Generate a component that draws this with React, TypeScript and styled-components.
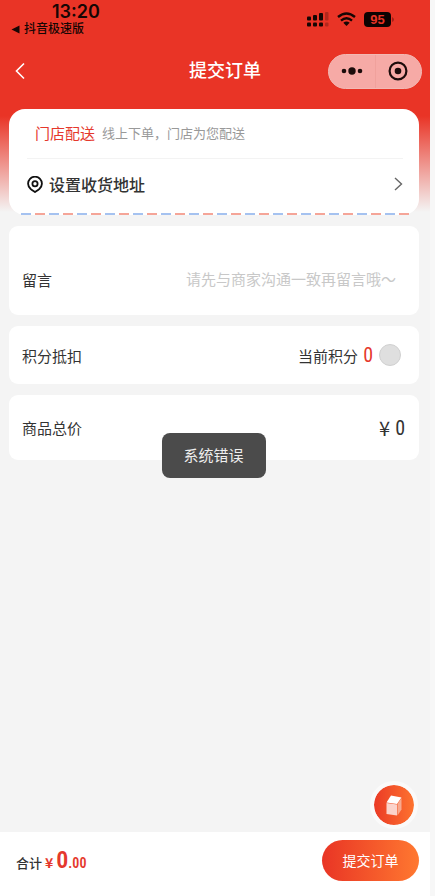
import React from "react";
import styled, { createGlobalStyle } from "styled-components";

const Global = createGlobalStyle`
  * { box-sizing: border-box; }
  body { margin: 0; background: #f7f7f7; }
  button, input { font-family: inherit; border: 0; background: none; padding: 0; margin: 0; }
  button { cursor: pointer; }
`;

const Screen = styled.div`
  display: flex;
  flex-direction: column;
  min-height: 100vh;
  margin-right: 5px;
  font-family: "Liberation Sans", "Noto Sans CJK SC", sans-serif;
  color: #333;
  background: linear-gradient(#e93426 0, #e93426 116px, #f4f4f4 212px);
`;

const StatusBar = styled.header`
  display: flex;
  justify-content: space-between;
  height: 38px;
  padding: 0 36px 0 11px;
  color: #160604;
`;

const ClockGroup = styled.div`
  display: flex;
  flex-direction: column;
`;

const Clock = styled.time`
  padding: 2px 0 0 41px;
  font: 600 18px/20px Inter, sans-serif;
`;

const BackToApp = styled.a`
  display: flex;
  align-items: center;
  gap: 4px;
  font-size: 12px;
  line-height: 14px;
  font-weight: 500;
  color: inherit;
  text-decoration: none;
`;

const StatusIcons = styled.div`
  display: flex;
  align-items: center;
  gap: 8px;
`;

const BatteryGroup = styled.div`
  display: flex;
  align-items: center;
  gap: 1px;
`;

const Battery = styled.span`
  width: 27px;
  height: 15px;
  border-radius: 4px;
  background: #0d0302;
  color: #e93426;
  font: 700 13px/15px "Liberation Sans", sans-serif;
  text-align: center;
`;

const NavBar = styled.nav`
  display: grid;
  grid-template-columns: 1fr auto 1fr;
  align-items: center;
  height: 66px;
  padding: 0 8px 0 14px;
  color: #fff;
`;

const IconButton = styled.button`
  display: flex;
  justify-self: start;
  color: inherit;
`;

const Title = styled.h1`
  margin: 0 0 0 14px;
  font-size: 18px;
  line-height: 26px;
  font-weight: 500;
`;

const Capsule = styled.div`
  display: flex;
  justify-self: end;
  width: 94px;
  height: 35px;
  border: 1px solid #f2b9b4;
  border-radius: 18px;
  background: #f6aaa6;
  color: #1c0c0b;
`;

const CapsuleButton = styled.button`
  display: flex;
  flex: 1;
  align-items: center;
  justify-content: center;
  color: inherit;
  & + & { border-left: 1px solid #f0a19c; }
`;

const Content = styled.main`
  display: flex;
  flex: 1;
  flex-direction: column;
  gap: 11px;
  padding: 5px 11px 0 9px;
`;

const Card = styled.section<{ $height: number; $top?: number }>`
  display: flex;
  align-items: center;
  justify-content: space-between;
  min-height: ${(p) => p.$height}px;
  padding: ${(p) => p.$top ?? 0}px 14px 0 13px;
  border-radius: 9px;
  background: #fff;
  font-size: 15px;
`;

const AddressCard = styled.section`
  padding: 0 16px 0 18px;
  border-radius: 16px;
  background: #fff;
`;

const DeliveryRow = styled.div`
  display: flex;
  align-items: center;
  gap: 7px;
  height: 50px;
  padding: 0 0 2px 8px;
  border-bottom: 1px solid #f3f3f3;
`;

const DeliveryType = styled.strong`
  font-size: 15px;
  font-weight: 400;
  color: #e5382c;
`;

const DeliveryNote = styled.span`
  font-size: 13px;
  color: #999;
`;

const AddressButton = styled.button`
  display: flex;
  align-items: center;
  width: 100%;
  height: 54px;
  padding-bottom: 4px;
  font-size: 16px;
  font-weight: 500;
  color: #333;
`;

const AddressLabel = styled.span`
  flex: 1;
  padding-left: 6px;
  text-align: left;
`;

const Stripe = styled.div`
  height: 2px;
  margin: 0 -6px 0 -6px;
  background: repeating-linear-gradient(90deg, #a5c2f0 0 10px, transparent 10px 14px, #f5a598 14px 24px, transparent 24px 28px);
`;

const MessageInput = styled.input`
  width: 214px;
  margin-right: 5px;
  font-size: 15px;
  color: #333;
  &::placeholder { color: #c8c8c8; opacity: 1; }
`;

const Points = styled.span`
  display: flex;
  align-items: center;
  padding-right: 4px;
`;

const Price = styled.span`
  display: flex;
  align-items: center;
  font-family: "Noto Sans CJK SC", sans-serif;
  font-size: 20px;
  line-height: 24px;
`;

const Digits = styled.span<{ $color: string }>`
  margin-left: 5px;
  font-family: "Roboto Condensed", "Liberation Sans Narrow", Roboto, sans-serif;
  font-size: 20px;
  line-height: 24px;
  color: ${(p) => p.$color};
`;

const PointsToggle = styled.input`
  appearance: none;
  width: 22px;
  height: 22px;
  margin-left: 6px;
  border: 1px solid #d0d0d0;
  border-radius: 50%;
  background: #dfdfdf;
`;

const Toast = styled.div`
  position: fixed;
  top: 433px;
  left: calc(50% - 4px);
  transform: translateX(-50%);
  padding: 11px 22px;
  border-radius: 8px;
  background: #4b4b4b;
  color: #eee;
  font-size: 15px;
  line-height: 23px;
  white-space: nowrap;
`;

const FloatingButton = styled.button`
  position: fixed;
  right: 17px;
  bottom: 67px;
  display: flex;
  align-items: center;
  justify-content: center;
  width: 48px;
  height: 48px;
  border: 4px solid #fafafa;
  border-radius: 50%;
  background: linear-gradient(90deg, #e93525, #ff7830) border-box;
  background-clip: padding-box;
`;

const Footer = styled.footer`
  display: flex;
  align-items: center;
  justify-content: space-between;
  height: 64px;
  padding: 0 11px 8px 16px;
  background: #fff;
`;

const Total = styled.div`
  display: flex;
  align-items: baseline;
  font-size: 13px;
  font-weight: 500;
`;

const Yen = styled.span`
  margin: 0 3px;
  font-family: "Noto Sans CJK SC", sans-serif;
  font-size: 14px;
  font-weight: 700;
  color: #e5382c;
`;

const Amount = styled.span<{ $size: number }>`
  font-family: "Roboto Condensed", "Liberation Sans Narrow", Roboto, sans-serif;
  font-size: ${(p) => p.$size}px;
  font-weight: 600;
  color: #e5382c;
`;

const SubmitButton = styled.button`
  width: 97px;
  height: 41px;
  border-radius: 21px;
  background: linear-gradient(90deg, #e93525, #ff7830);
  color: #fff;
  font-size: 14px;
`;

export default function App() {
  return (
    <>
      <Global />
      <Screen>
        <StatusBar>
          <ClockGroup>
            <Clock>13:20</Clock>
            <BackToApp href="#">
              <svg width="9" height="9" viewBox="0 0 9 9" aria-hidden="true"><path d="M8.5.5v8L.5 4.5z" fill="currentColor" /></svg>
              抖音极速版
            </BackToApp>
          </ClockGroup>
          <StatusIcons>
            <svg width="22" height="15" viewBox="0 0 22 15" fill="currentColor" aria-hidden="true">
              <rect x="0" y="4.5" width="4" height="4" rx="1" />
              <rect x="6" y="3" width="4" height="5.5" rx="1" />
              <rect x="12" y="1" width="4" height="7.5" rx="1" />
              <g opacity=".25"><rect x="18" width="3.5" height="8.5" rx="1" /><rect x="18" y="10.5" width="3.5" height="4" rx="1" /></g>
              <rect x="0" y="10.5" width="4" height="4" rx="1" />
              <rect x="6" y="10.5" width="4" height="4" rx="1" />
              <rect x="12" y="10.5" width="4" height="4" rx="1" />
            </svg>
            <svg width="19" height="14" viewBox="0 0 19 14" fill="none" stroke="currentColor" strokeWidth="2.4" aria-hidden="true">
              <path d="M1 5Q9.500-2.200 18 5M4 8.600Q9.500 3.800 15 8.600" />
              <path d="M6.300 10.800Q9.500 8.300 12.700 10.800L9.500 13.900z" fill="currentColor" stroke="none" />
            </svg>
            <BatteryGroup>
              <Battery>95</Battery>
              <svg width="2" height="5" viewBox="0 0 2 5" aria-hidden="true"><path d="M0 0q2 1 2 2.500T0 5z" fill="#a52018" /></svg>
            </BatteryGroup>
          </StatusIcons>
        </StatusBar>
        <NavBar>
          <IconButton aria-label="返回">
            <svg width="12" height="18" viewBox="0 0 12 18" fill="none" stroke="currentColor" strokeWidth="1.6"><path d="M10 1.500 2.500 9l7.500 7.500" /></svg>
          </IconButton>
          <Title>提交订单</Title>
          <Capsule>
            <CapsuleButton aria-label="更多">
              <svg width="22" height="8" viewBox="0 0 22 8" fill="currentColor"><circle cx="3" cy="4" r="2.300" /><circle cx="11" cy="4" r="3.700" /><circle cx="19" cy="4" r="2.300" /></svg>
            </CapsuleButton>
            <CapsuleButton aria-label="关闭">
              <svg width="20" height="20" viewBox="0 0 20 20"><circle cx="10" cy="10" r="8.400" fill="none" stroke="currentColor" strokeWidth="2.200" /><circle cx="10" cy="10" r="3.300" fill="currentColor" /></svg>
            </CapsuleButton>
          </Capsule>
        </NavBar>
        <Content>
          <AddressCard>
            <DeliveryRow>
              <DeliveryType>门店配送</DeliveryType>
              <DeliveryNote>线上下单，门店为您配送</DeliveryNote>
            </DeliveryRow>
            <AddressButton>
              <svg width="16" height="17" viewBox="0 0 16 17" fill="none" stroke="#111" strokeWidth="1.800" strokeLinejoin="round" aria-hidden="true">
                <path d="M8 16C6.500 15 5 14.200 3.500 12.800A6.900 6.900 0 1 1 12.500 12.800C11 14.200 9.500 15 8 16z" /><circle cx="8" cy="7.800" r="2.600" />
              </svg>
              <AddressLabel>设置收货地址</AddressLabel>
              <svg width="9" height="14" viewBox="0 0 9 14" fill="none" stroke="#666" strokeWidth="1.400" aria-hidden="true"><path d="M1 1l6.500 6L1 13" /></svg>
            </AddressButton>
            <Stripe />
          </AddressCard>
          <Card $height={89} $top={18}>
            <label htmlFor="message">留言</label>
            <MessageInput id="message" placeholder="请先与商家沟通一致再留言哦～" />
          </Card>
          <Card $height={58}>
            <label htmlFor="points">积分抵扣</label>
            <Points>
              当前积分<Digits $color="#e5382c">0</Digits>
              <PointsToggle id="points" type="checkbox" />
            </Points>
          </Card>
          <Card $height={65}>
            <span>商品总价</span>
            <Price>¥<Digits $color="#333">0</Digits></Price>
          </Card>
        </Content>
        <Footer>
          <Total>合计<Yen>¥</Yen><Amount $size={24}>0</Amount><Amount $size={14}>.00</Amount></Total>
          <SubmitButton>提交订单</SubmitButton>
        </Footer>
        <Toast role="status">系统错误</Toast>
        <FloatingButton aria-label="订单盒">
          <svg width="16" height="21" viewBox="0 0 16 21" aria-hidden="true">
            <path d="M5 .5 15.500 2.500 11 9 .5 7.500z" fill="#fff" /><path d="M.5 8 11 9.500V20.500L.5 19z" fill="#fbd3cb" /><path d="M11.500 9 15.500 3v11.500l-4 6z" fill="#f8a98e" />
          </svg>
        </FloatingButton>
      </Screen>
    </>
  );
}
